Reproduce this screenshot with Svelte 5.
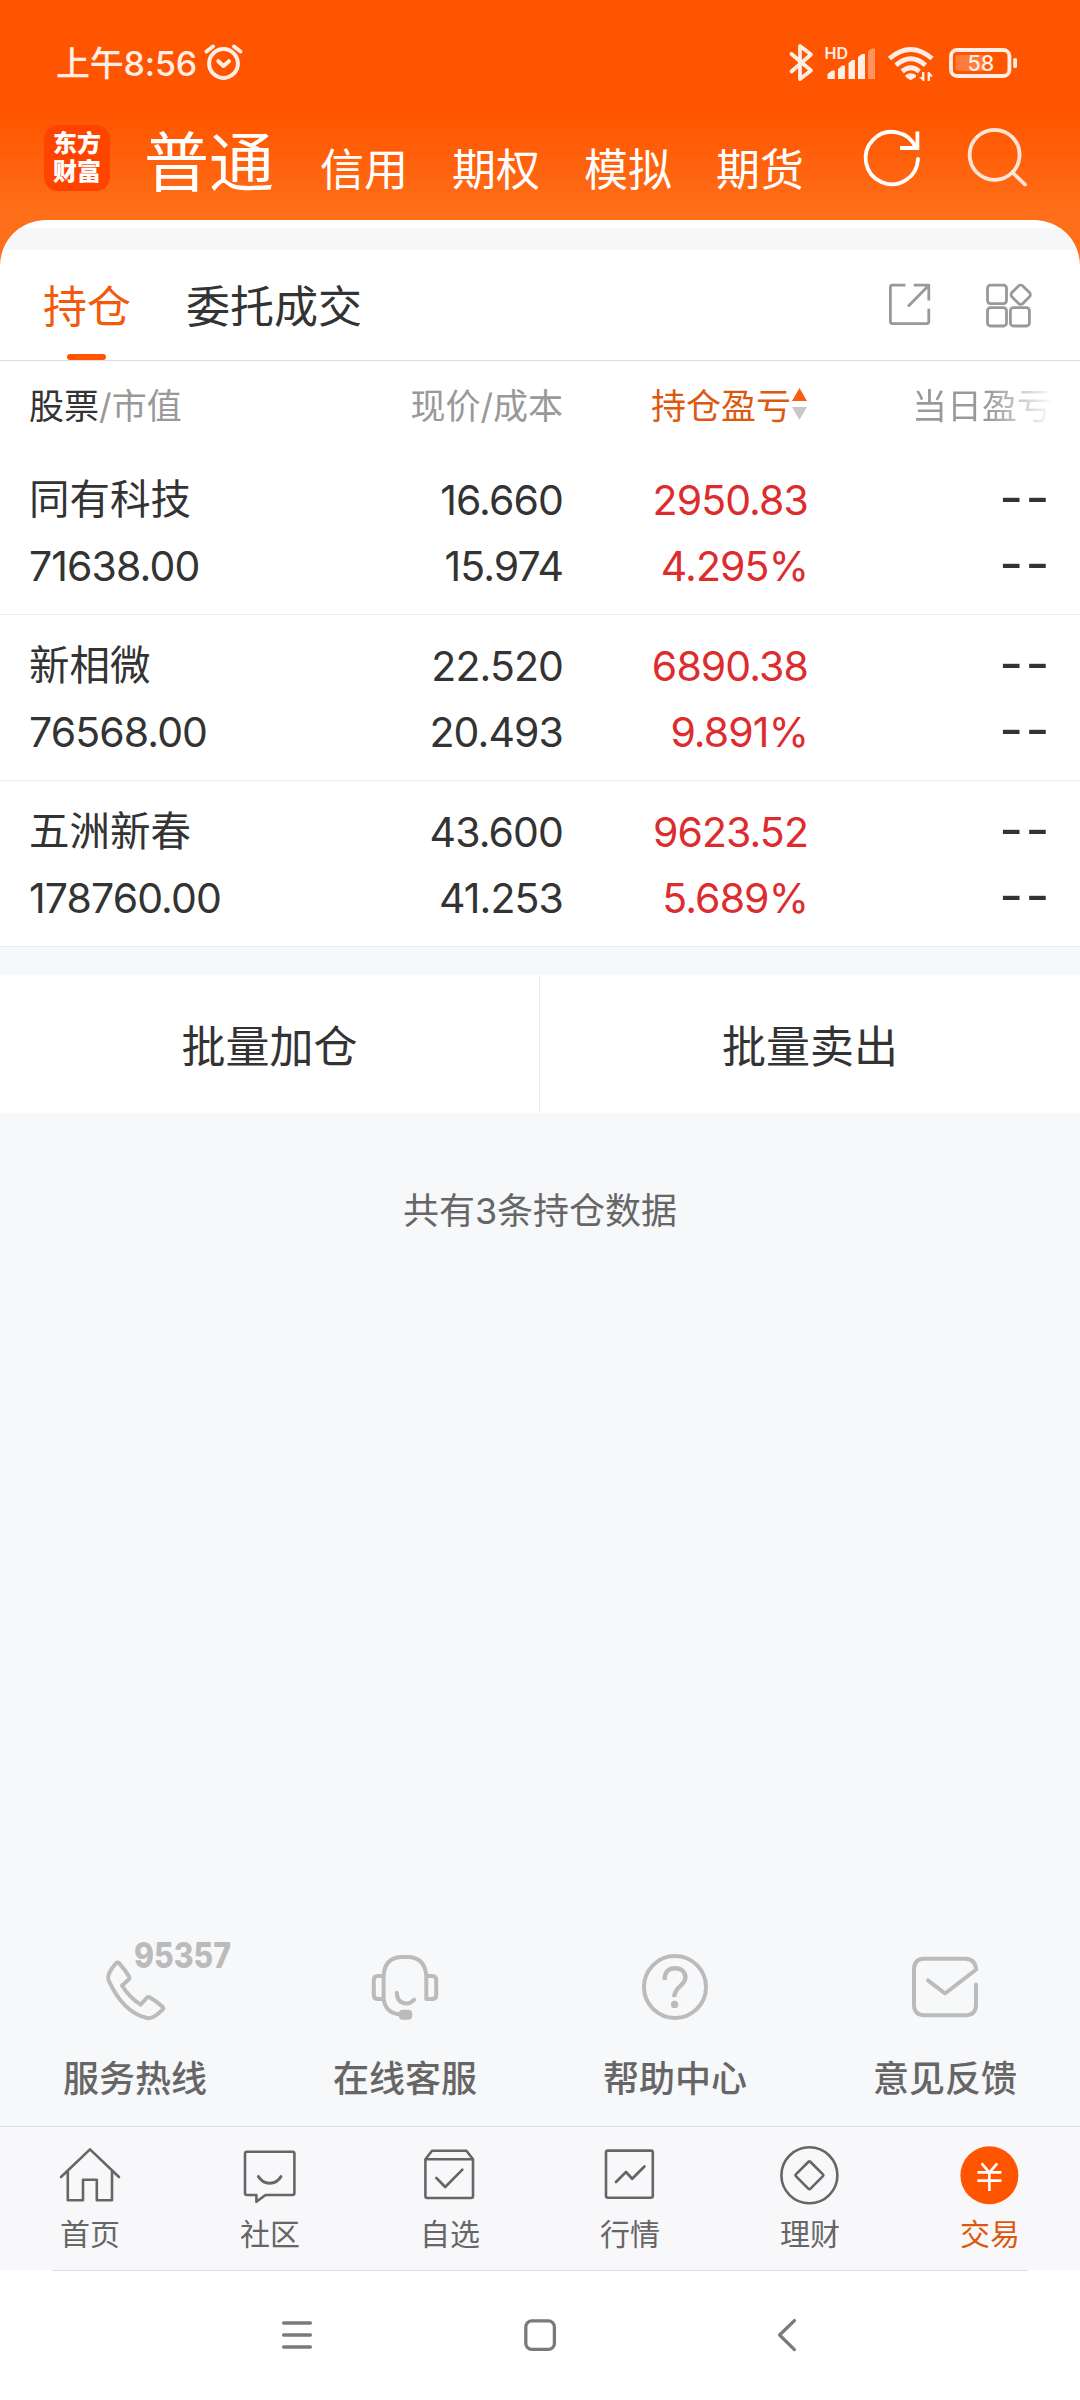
<script lang="ts">
  interface Holding {
    name: string;
    value: string;
    price: string;
    cost: string;
    profit: string;
    ratio: string;
  }

  const markets = ['普通', '信用', '期权', '模拟', '期货'];
  const holdings: Holding[] = [
    { name: '同有科技', value: '71638.00', price: '16.660', cost: '15.974', profit: '2950.83', ratio: '4.295%' },
    { name: '新相微', value: '76568.00', price: '22.520', cost: '20.493', profit: '6890.38', ratio: '9.891%' },
    { name: '五洲新春', value: '178760.00', price: '43.600', cost: '41.253', profit: '9623.52', ratio: '5.689%' },
  ];
  const services = [
    { id: 'phone', label: '服务热线' },
    { id: 'headset', label: '在线客服' },
    { id: 'help', label: '帮助中心' },
    { id: 'mail', label: '意见反馈' },
  ];
  const tabs = [
    { id: 'home', label: '首页' },
    { id: 'community', label: '社区' },
    { id: 'watch', label: '自选' },
    { id: 'quotes', label: '行情' },
    { id: 'wealth', label: '理财' },
    { id: 'trade', label: '交易' },
  ];

  let market = $state('普通');
  let tab = $state('trade');
</script>

<div class="app">
  <header>
    <div class="status">
      <div class="clock">
        <span>上午8:56</span>
        <svg width="40" height="38" viewBox="204 45 40 38" fill="none" stroke="currentColor" stroke-width="4" stroke-linecap="round" stroke-linejoin="round">
          <circle cx="223.5" cy="64.5" r="14.4" />
          <path d="M206.5 52.5L213 47.5M234 47.5L240.5 52.5M218.3 62.2L223.5 67L229 62.2" />
        </svg>
      </div>
      <svg class="indicators" width="230" height="40" viewBox="788 43 230 40" fill="none" stroke="currentColor">
        <path d="M791.5 54L811 70.5L800 79V46L811 54.5L791.5 71.5" stroke-width="3.8" stroke-linecap="round" stroke-linejoin="round" />
        <g fill="currentColor" stroke="none">
          <text x="824.5" y="59" font-size="16" font-weight="600">HD</text>
          <path d="M827.5 79V74L832 70.5H834.8V79ZM838 79V69L842 65.5H845V79ZM848.5 79V63L852 60H855V79ZM858 79V57L862 54H865V79Z" />
          <path d="M868 79V51L872 48.5H875V79Z" opacity=".4" />
          <path d="M905.5 75Q910.5 71.5 916 75V77L910.7 80.3L905.5 77Z" />
          <path d="M919 77H922V72H924.4V81H923ZM927.6 81V72H929.4L933 76.6H930V81Z" />
          <rect x="955.6" y="55" width="29" height="16" rx="3" opacity=".25" />
          <text x="967.5" y="71.2" font-size="21.5" font-weight="500">58</text>
          <rect x="1013.2" y="58" width="3.8" height="10" rx="1.6" />
        </g>
        <path d="M889.5 58.5Q910.7 40.5 932 58.5M896 65.2Q910.7 52.5 925.5 65.2M902.2 71.4Q910.7 64 919.5 71.4" stroke-width="4.8" />
        <rect x="951" y="50" width="58.4" height="26" rx="6" stroke-width="3.8" />
      </svg>
    </div>

    <div class="topbar">
      <div class="logo"><span>东方</span><span>财富</span></div>
      <nav class="markets">
        {#each markets as m (m)}
          <button type="button" class:is-active={market === m} onclick={() => (market = m)}>{m}</button>
        {/each}
      </nav>
      <svg class="actions" width="166" height="64" viewBox="862 126 166 64" fill="none" stroke="#fff" stroke-width="3.8">
        <path d="M918 159A26.2 26.2 0 1 1 915.8 147.5" stroke-linecap="round" />
        <path d="M917.4 131.5V148H900" />
        <g opacity=".84">
          <circle cx="994.6" cy="154.8" r="25" />
          <path d="M1012.5 172.5L1025 184.5" stroke-linecap="round" />
        </g>
      </svg>
    </div>
  </header>

  <main>
    <div class="strip"></div>
    <div class="subtabs">
      <button type="button" class="subtab is-active">持仓</button>
      <button type="button" class="subtab">委托成交</button>
      <svg width="144" height="46" viewBox="888 282 144 46" fill="none" stroke="#999" stroke-width="2.8" stroke-linecap="butt" stroke-linejoin="round">
        <path d="M905.4 285.2H892.4Q890.4 285.2 890.4 287.2V321.6Q890.4 323.6 892.4 323.6H926.8Q928.8 323.6 928.8 321.6V308.8M913.8 285.2H928.8V300.4M908 306.4L928.8 285.2" />
        <rect x="987.5" y="285.2" width="19" height="18.4" rx="3" />
        <rect x="987.5" y="307.6" width="19" height="18.4" rx="3" />
        <rect x="1010.4" y="307.6" width="19" height="18.4" rx="3" />
        <rect x="1013" y="287" width="15.4" height="15.4" rx="3" transform="rotate(45 1020.7 294.7)" />
      </svg>
    </div>

    <div class="row head">
      <span><b>股票</b>/市值</span>
      <span class="num">现价/成本</span>
      <span class="num sorted">
        持仓盈亏
        <svg width="15" height="32" viewBox="0 0 15 32">
          <path d="M7.5 0L15 13H0Z" fill="#f95d12" />
          <path d="M7.5 32L15 19H0Z" fill="#c8c8c8" />
        </svg>
      </span>
      <span class="num faded">当日盈亏</span>
    </div>

    {#each holdings as h (h.name)}
      <div class="row item">
        <div><p class="name">{h.name}</p><p>{h.value}</p></div>
        <div class="num"><p>{h.price}</p><p>{h.cost}</p></div>
        <div class="num up"><p>{h.profit}</p><p>{h.ratio}</p></div>
        <div class="num dash"><p>--</p><p>--</p></div>
      </div>
    {/each}
  </main>

  <div class="batch">
    <button type="button">批量加仓</button>
    <button type="button">批量卖出</button>
  </div>
  <p class="count">共有{holdings.length}条持仓数据</p>

  <div class="services">
    {#each services as s (s.id)}
      <div class="service">
        <svg width="270" height="90" viewBox="0 0 270 90" fill="none" stroke="#bbb" stroke-width="4" stroke-linecap="round" stroke-linejoin="round">
          {#if s.id === 'phone'}
            <path d="M116 23.2Q117.5 21.6 119 23.2Q125 29.5 129.3 37Q129.8 38.3 128.8 39.4L122 45.5Q129 57 140.5 64.6L147 57.6Q148.2 56.5 149.6 57.2Q157 61.3 162.8 67Q163.8 68.2 162.8 69.4Q153 79.5 147 78Q123 72.5 108.5 40Q106.5 34 116 23.2Z" />
            <text x="134" y="28" font-size="35" font-weight="800" fill="#bbb" stroke="none" textLength="97" lengthAdjust="spacingAndGlyphs">95357</text>
          {:else if s.id === 'headset'}
            <path d="M113.6 59V36Q114.5 18 131 17H139Q155 18 156.3 36V59H162Q166.2 59 166.2 55V40Q166.2 36 162 36H156.3M113.6 36H108Q103.8 36 103.8 40V55Q103.8 59 108 59H113.6Q115.5 73 130 74.5M126.8 52.8Q127 63 136.5 63.6Q140.5 63.6 144.2 59.6" />
            <rect x="128.8" y="69.8" width="13.4" height="10" rx="4" fill="#bbb" stroke="none" />
          {:else if s.id === 'help'}
            <circle cx="135" cy="47" r="31" />
            <path d="M124.7 40C124.5 31.5 129 28.2 135 28.2S145.4 31.5 145.4 37.5C145.4 46 134.3 46 134.3 57" stroke-width="4.4" stroke-linecap="butt" />
            <circle cx="134.6" cy="64.4" r="3.7" fill="#bbb" stroke="none" />
          {:else}
            <path d="M166 44.5V65.5Q165.5 75 156 75.3H114Q104.5 75 104 65.5V28.5Q104.5 19 114 18.7H156Q165 19 166.2 29.5L135 53.5L118 40.3" />
          {/if}
        </svg>
        <span>{s.label}</span>
      </div>
    {/each}
  </div>

  <nav class="tabbar">
    {#each tabs as t (t.id)}
      <button type="button" class:is-active={tab === t.id} onclick={() => (tab = t.id)}>
        <svg width="64" height="64" viewBox="0 0 64 64" fill="none" stroke="#666" stroke-width="2.6" stroke-linecap="round" stroke-linejoin="round">
          {#if t.id === 'home'}
            <path d="M3 34L32 6.4L61 34M9.8 28.5V57.2H25V36.8H38.8V57.2H54V28.5" />
          {:else if t.id === 'community'}
            <path d="M9 8.8H54.4Q56.4 8.8 56.4 10.8V50Q56.4 52 54.4 52H27.5L18.4 58.8V52H9Q7 52 7 50V10.8Q7 8.8 9 8.8Z" />
            <path d="M20.4 33.6C25.5 42.4 38 42.4 43 33.6" stroke-width="3" />
          {:else if t.id === 'watch'}
            <path d="M7.4 16.3L14 7.8H48.4L55 16.3V53Q55 55 53 55H9.4Q7.4 55 7.4 53ZM7.4 16.3H55M18.4 35L27.2 44L44.4 26.6" />
          {:else if t.id === 'quotes'}
            <rect x="8" y="7.6" width="46.8" height="47.2" rx="2" />
            <path d="M18 39L28 29L34.2 35.7L46.4 23.6" stroke-width="2.8" />
          {:else if t.id === 'wealth'}
            <circle cx="31.4" cy="32.3" r="28" />
            <rect x="21.2" y="22.1" width="20.4" height="20.4" rx="1.6" transform="rotate(45 31.4 32.3)" />
          {:else}
            <circle cx="31.4" cy="32.3" r="29" fill="#f50" stroke="none" />
            <path d="M23.6 20.4L31.4 29.6L39.2 20.4M31.4 29.6V48M19.4 29.4H43.4M19.4 37.6H43.4" stroke="#fff" stroke-width="2.6" stroke-linecap="butt" />
          {/if}
        </svg>
        <span>{t.label}</span>
      </button>
    {/each}
  </nav>

  <footer>
    <svg width="32" height="34" viewBox="0 0 32 34">
      <path d="M3.6 5H30.4M3.6 17H30.4M3.6 29H30.4" />
    </svg>
    <svg width="32" height="34" viewBox="0 0 32 34">
      <rect x="1.8" y="2.8" width="28.6" height="28.6" rx="6" />
    </svg>
    <svg width="32" height="34" viewBox="0 0 32 34">
      <path d="M26.4 2.6L11.6 17L26.4 31.6" />
    </svg>
  </footer>
</div>

<style>
  :global(body) {
    margin: 0;
    background: #f7f8fa;
  }
  .app {
    display: flex;
    flex-direction: column;
    width: 1080px;
    height: 2400px;
    overflow: hidden;
    background: #f7f8fa;
    color: #333;
    font-family: Inter, 'Noto Sans CJK SC', sans-serif;
  }
  p {
    margin: 0;
  }
  button {
    padding: 0;
    border: 0;
    background: none;
    color: inherit;
    font: inherit;
  }
  svg {
    flex: none;
    display: block;
    overflow: visible;
  }
  header {
    flex: none;
    height: 270px;
    margin-bottom: -50px;
    background: linear-gradient(#f50 0, #f50 115px, #ff6f1a 215px);
    color: #fff;
  }
  .status {
    display: flex;
    align-items: center;
    justify-content: space-between;
    height: 40px;
    padding: 43px 62px 0 56px;
    color: #ffeee5;
  }
  .clock {
    display: flex;
    align-items: center;
    gap: 7px;
    font-size: 34px;
    font-weight: 500;
    letter-spacing: -0.2px;
    line-height: 40px;
  }
  .clock span {
    padding-top: 2px;
  }
  .topbar {
    display: flex;
    padding: 42px 52px 0 44px;
  }
  .logo {
    display: flex;
    flex-direction: column;
    align-items: center;
    justify-content: center;
    width: 66px;
    height: 66px;
    border-radius: 14px;
    background: #ff4400;
    font-size: 24px;
    font-weight: 900;
    line-height: 28px;
  }
  .markets {
    display: flex;
    align-items: baseline;
    gap: 44px;
    margin: 1px 0 0 34px;
    font-size: 44px;
    line-height: 74px;
  }
  .markets .is-active {
    margin-right: 2px;
    font-size: 65px;
  }
  .actions {
    margin: 1px 0 0 auto;
  }

  main {
    position: relative;
    flex: none;
    overflow: hidden;
    padding-top: 8px;
    border-radius: 46px 46px 0 0;
    background: #fff;
  }
  .strip {
    height: 22px;
    background: #f7f7fa;
  }
  .subtabs {
    display: flex;
    align-items: center;
    gap: 55px;
    height: 110px;
    padding: 0 48px 0 43px;
    border-bottom: 1px solid #ddd;
    font-size: 44px;
  }
  .subtabs svg {
    margin-left: auto;
  }
  .subtab {
    position: relative;
    height: 110px;
    padding-bottom: 3px;
  }
  .subtab.is-active {
    color: #f25a0c;
  }
  .subtab.is-active::after {
    content: '';
    position: absolute;
    left: 24px;
    bottom: 0;
    width: 39px;
    height: 6px;
    border-radius: 3px;
    background: #f50;
  }
  .row {
    display: grid;
    grid-template-columns: 304px 230px 245px 242px;
    padding: 0 30px 0 29px;
  }
  .num {
    text-align: right;
  }
  .head {
    align-items: center;
    height: 85px;
    padding-bottom: 3px;
    color: #999;
    font-size: 35px;
  }
  .head b {
    color: #333;
    font-weight: 400;
  }
  .sorted {
    display: flex;
    align-items: center;
    justify-content: flex-end;
    gap: 1px;
    padding-right: 1px;
    color: #dc5a10;
  }
  .faded {
    margin-right: -2px;
    background: linear-gradient(90deg, #999 0, #999 180px, #fff 246px);
    background-clip: text;
    color: transparent;
  }
  .item {
    height: 147px;
    padding-top: 18px;
    border-bottom: 1px solid #e9eaec;
    font-size: 41px;
    letter-spacing: -0.9px;
    line-height: 66px;
  }
  .name {
    font-size: 40.5px;
    letter-spacing: 0;
  }
  .up {
    color: #dd2c2e;
  }
  .dash {
    margin: -2px -2px 0 0;
    font-size: 52px;
    letter-spacing: 2.5px;
  }

  .batch {
    flex: none;
    display: grid;
    grid-template-columns: 539px 541px;
    height: 138px;
    margin-top: 28px;
    background: #fff;
    font-size: 44px;
  }
  .batch button + button {
    border-left: 1px solid #ebedf0;
  }
  .count {
    margin-top: 73px;
    color: #666;
    font-size: 36px;
    line-height: 50px;
    text-align: center;
  }

  .services {
    display: flex;
    margin-top: auto;
    height: 186px;
  }
  .service {
    display: flex;
    flex-direction: column;
    align-items: center;
    width: 270px;
    gap: 24px;
    color: #666;
    font-size: 36px;
    font-weight: 500;
    line-height: 50px;
  }
  .tabbar {
    flex: none;
    display: flex;
    height: 143px;
    border-top: 1px solid #e0e1e3;
    background: #f8f8fa;
  }
  .tabbar button {
    display: flex;
    flex-direction: column;
    align-items: center;
    flex: 1;
    gap: 7px;
    padding-top: 16px;
    color: #666;
    font-size: 30px;
    line-height: 40px;
  }
  .tabbar .is-active {
    color: #e0570c;
  }
  footer {
    flex: none;
    display: flex;
    justify-content: center;
    gap: 212px;
    height: 82px;
    padding-top: 48px;
    background: linear-gradient(#dfdfe1, #dfdfe1) center top / 976px 1px no-repeat #fff;
  }
  footer svg {
    fill: none;
    stroke: #7a7a7a;
    stroke-width: 3.3;
    stroke-linecap: round;
    stroke-linejoin: round;
  }
</style>
